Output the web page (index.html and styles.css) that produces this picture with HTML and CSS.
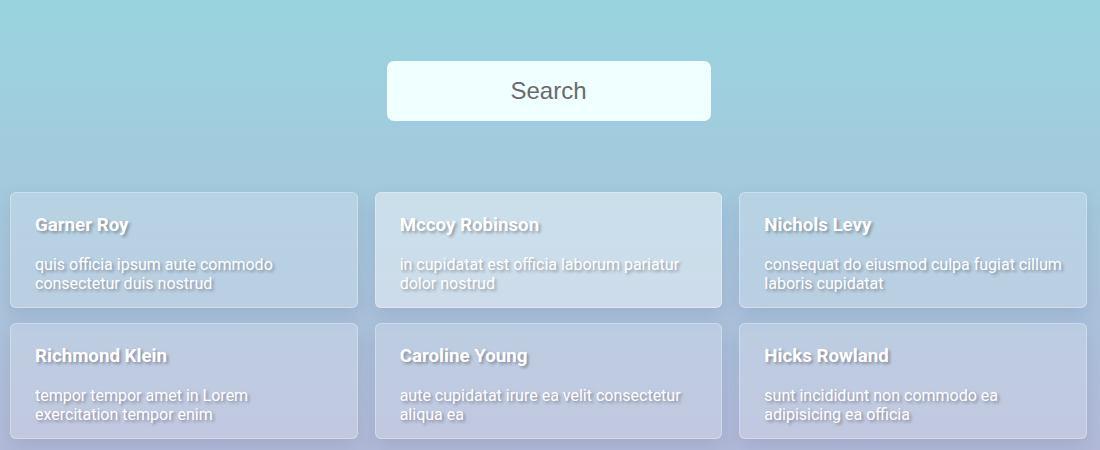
FILE: index.html
```html
<!DOCTYPE html>
<html>
<head>
<meta charset="utf-8">
<link rel="stylesheet" href="styles.css">
</head>
<body>
<div class="page">
  <div class="search-wrap">
    <input class="search" type="text" placeholder="Search">
  </div>
  <div class="grid">
    <div class="card"><h3>Garner Roy</h3><p>quis officia ipsum aute commodo consectetur duis nostrud</p></div>
    <div class="card hover"><h3>Mccoy Robinson</h3><p>in cupidatat est officia laborum pariatur dolor nostrud</p></div>
    <div class="card"><h3>Nichols Levy</h3><p>consequat do eiusmod culpa fugiat cillum laboris cupidatat</p></div>
    <div class="card"><h3>Richmond Klein</h3><p>tempor tempor amet in Lorem exercitation tempor enim</p></div>
    <div class="card"><h3>Caroline Young</h3><p>aute cupidatat irure ea velit consectetur aliqua ea</p></div>
    <div class="card"><h3>Hicks Rowland</h3><p>sunt incididunt non commodo ea adipisicing ea officia</p></div>
  </div>
</div>
</body>
</html>
```

FILE: styles.css
```css
html, body {
  margin: 0;
  padding: 0;
  height: 100%;
}
body {
  background: linear-gradient(to bottom, #99d4df 0%, #b3bad9 100%);
  background-attachment: fixed;
  font-family: Roboto, "Liberation Sans", sans-serif;
  overflow: hidden;
}
.page {
  padding: 61px 13px 0 10px;
}
.search-wrap {
  display: flex;
  justify-content: center;
}
.search {
  width: 324px;
  height: 60px;
  box-sizing: border-box;
  border: none;
  border-radius: 7px;
  background: #f0ffff;
  font-family: "Liberation Sans", Arial, sans-serif;
  font-size: 24px;
  text-align: center;
  outline: none;
  color: #666;
}
.search::placeholder {
  color: #6b6b6b;
}
.grid {
  margin-top: 71px;
  display: grid;
  grid-template-columns: repeat(3, 1fr);
  column-gap: 17px;
  row-gap: 15px;
}
.card {
  height: 116px;
  box-sizing: border-box;
  padding: 21px 24px 0 24px;
  background: rgba(255, 255, 255, 0.2);
  border: 1px solid rgba(255, 255, 255, 0.3);
  border-radius: 6px;
  box-shadow: 0 8px 18px rgba(60, 90, 130, 0.15);
  color: #fff;
  text-shadow: 2px 2px 3px rgba(0, 0, 0, 0.3);
}
.card.hover {
  background: rgba(255, 255, 255, 0.42);
}
.card h3 {
  margin: 0;
  font-size: 18.72px;
  font-weight: 700;
}
.card p {
  margin: 19px 0 0 0;
  font-size: 16px;
  line-height: 19px;
}
```
